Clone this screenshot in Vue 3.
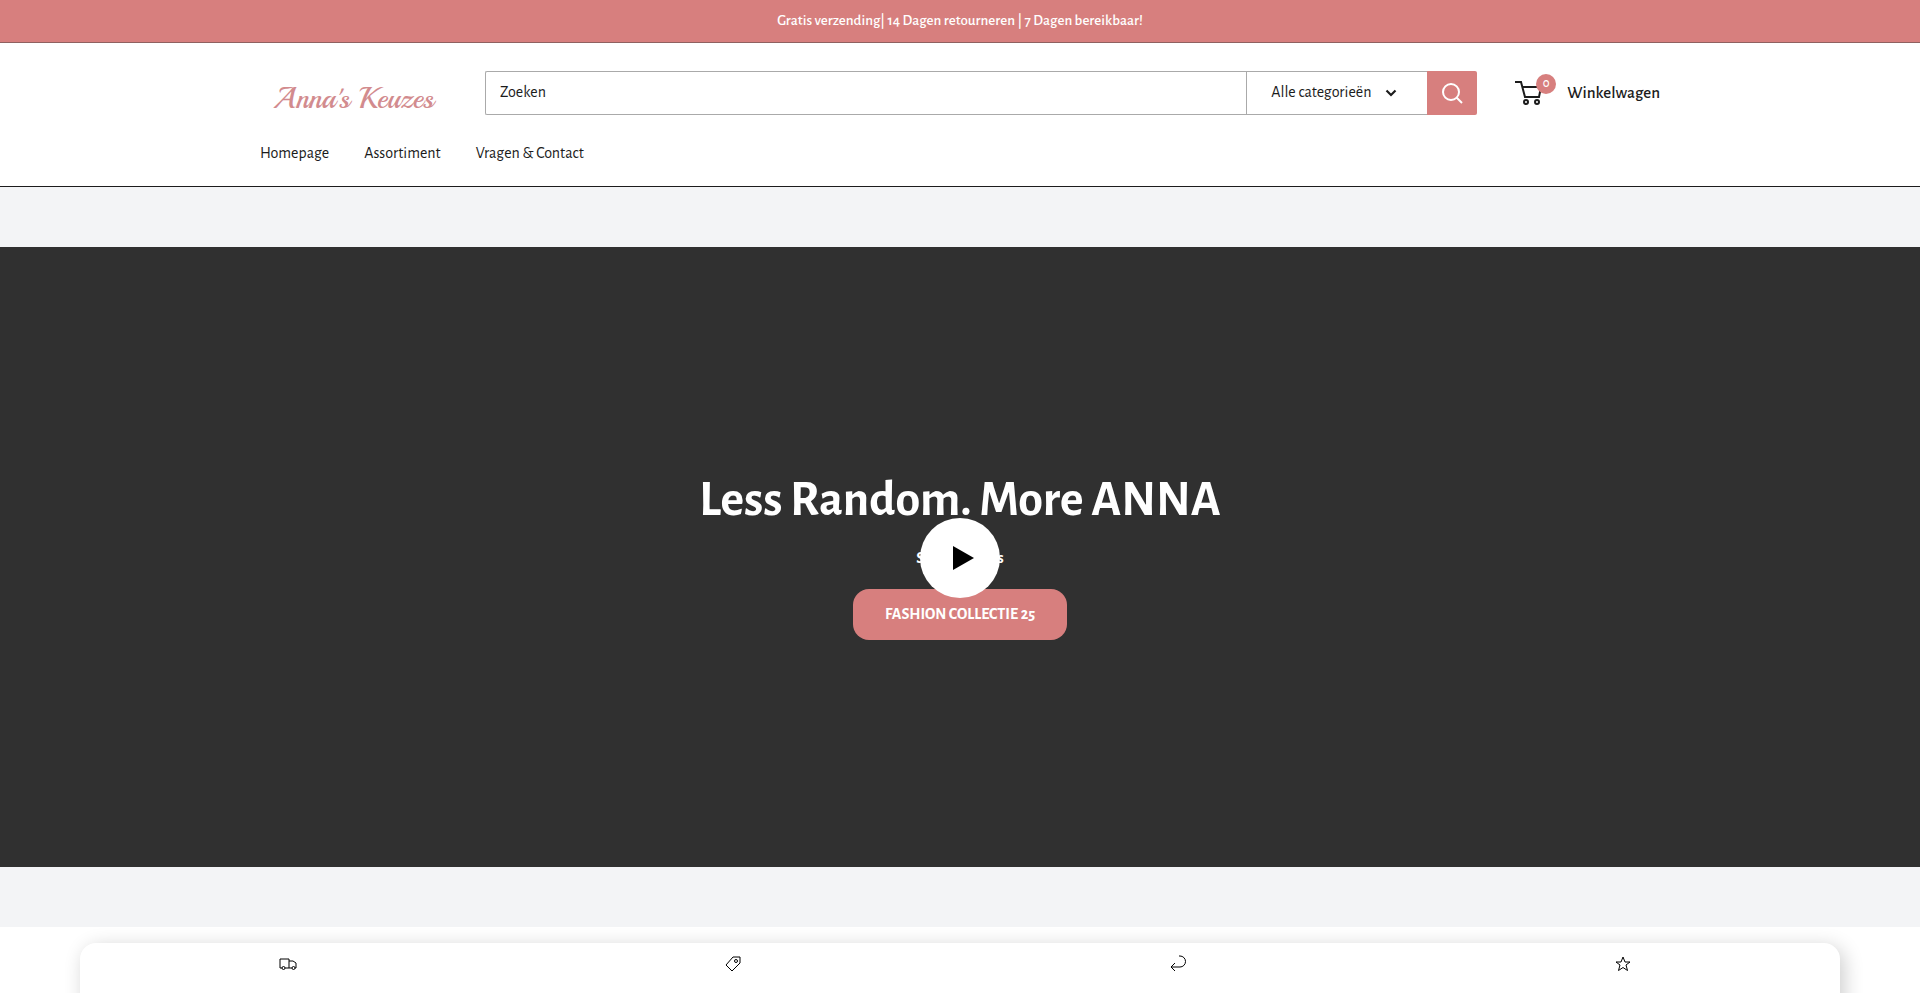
<script setup>
import { ref } from "vue";

const query = ref("");
const category = ref("all");
const cartCount = ref(0);

const links = ["Homepage", "Assortiment", "Vragen & Contact"];
const categories = [
  { value: "all", label: "Alle categorieën" },
];
</script>

<template>
  <div class="page">
    <div class="announcement">
      <p>Gratis verzending| 14 Dagen retourneren | 7 Dagen bereikbaar!</p>
    </div>

    <header class="header">
      <div class="container">
        <div class="header-row">
          <a href="#" class="logo">Anna's Keuzes</a>
          <form class="search" @submit.prevent>
            <input v-model="query" class="search-input" type="text" placeholder="Zoeken" aria-label="Zoeken" />
            <div class="search-filter">
              <select v-model="category" aria-label="Categorie">
                <option v-for="c in categories" :key="c.value" :value="c.value">{{ c.label }}</option>
              </select>
              <svg class="chevron" viewBox="0 0 12 8" width="12" height="8">
                <path d="M1.500 1.500 6 6l4.500-4.500" fill="none" stroke="currentColor" stroke-width="2.200" />
              </svg>
            </div>
            <button class="search-btn" type="submit" aria-label="Zoek">
              <svg viewBox="0 0 21 21" width="21" height="21" fill="none" stroke="currentColor" stroke-width="2">
                <circle cx="9" cy="9" r="8" />
                <path d="m14.500 14.500 5.500 5.500" />
              </svg>
            </button>
          </form>
          <a href="#" class="cart">
            <span class="cart-icon">
              <svg viewBox="0 0 27 24" width="27" height="24" fill="none" stroke="currentColor" stroke-width="2">
                <path d="M0 1h6l4 15h14l2-10H7.500" />
                <circle cx="11" cy="21" r="2" />
                <circle cx="22" cy="21" r="2" />
              </svg>
              <span class="cart-count">{{ cartCount }}</span>
            </span>
            <span>Winkelwagen</span>
          </a>
        </div>
        <nav class="nav">
          <a v-for="link in links" :key="link" href="#">{{ link }}</a>
        </nav>
      </div>
    </header>

    <section class="hero">
      <h1>Less Random. More ANNA</h1>
      <p>Shop de looks</p>
      <a href="#" class="hero-btn">FASHION COLLECTIE 25</a>
      <button class="play" type="button" aria-label="Video afspelen">
        <svg viewBox="0 0 21 24" width="21" height="24"><path d="M0 0v24l21-12z" /></svg>
      </button>
    </section>

    <section class="usps">
      <div class="usp-card">
        <div class="usp">
          <svg viewBox="0 0 18 18">
            <path d="M3 13H1V4h9v9H6M10 6h4l3 2v5h-1M13 13h-3" />
            <circle cx="4.500" cy="13" r="1.500" />
            <circle cx="14.500" cy="13" r="1.500" />
          </svg>
        </div>
        <div class="usp">
          <svg viewBox="0 0 18 18">
            <path d="M9 2h7v6l-8 8-6-6z" />
            <circle cx="12" cy="6" r="1.500" />
          </svg>
        </div>
        <div class="usp">
          <svg viewBox="0 0 18 18">
            <path d="M10 1h1a5.500 5.500 0 0 1 0 11H2M6 8l-4 4 4 4" />
          </svg>
        </div>
        <div class="usp">
          <svg viewBox="0 0 18 18">
            <path d="m9 2 2 5h5l-4 3 1.500 5.500L9 12.500l-4.500 3L6 10 2 7h5z" />
          </svg>
        </div>
      </div>
    </section>
  </div>
</template>

<style>
body {
  margin: 0;
  background: #fff;
}
</style>

<style scoped>
* {
  box-sizing: border-box;
}

.page {
  font-family: "Alegreya Sans", Lato, sans-serif;
  font-size: 16px;
  line-height: 24px;
  color: #1c1c1c;
  height: 100vh;
  overflow: hidden;
}

p,
h1 {
  margin: 0;
}

a {
  color: inherit;
  text-decoration: none;
}

.announcement {
  padding: 9px 16px;
  text-align: center;
  font-size: 15px;
  font-weight: 500;
  color: #fff;
  background: #d77f7e;
  border-bottom: 1px solid #8f6160;
}

.header {
  padding: 28px 0 21px;
  border-bottom: 1px solid #1c1c1c;
}

.container {
  max-width: 1400px;
  margin: 0 auto;
}

.header-row {
  display: flex;
  align-items: center;
}

.logo {
  width: 225px;
  padding: 12px 0 0 13px;
  font-family: Playball, "Liberation Serif", serif;
  font-size: 29px;
  color: #d28b8e;
  white-space: nowrap;
}

.search {
  display: flex;
  flex: 1;
  height: 44px;
}

.search-input {
  flex: 1;
  min-width: 0;
  padding: 0 14px 2px;
  font: inherit;
  color: inherit;
  border: 1px solid #aaa;
  border-right: none;
  border-radius: 2px 0 0 2px;
}

.search-input::placeholder {
  color: inherit;
  opacity: 1;
}

.search-filter {
  display: flex;
  align-items: center;
  width: 181px;
  padding-left: 24px;
  border: 1px solid #aaa;
  border-right: none;
}

.search-filter select {
  width: 114px;
  padding: 0 0 2px;
  font: inherit;
  color: inherit;
  background: none;
  border: none;
  appearance: none;
}

.search-btn {
  display: flex;
  align-items: center;
  justify-content: center;
  width: 50px;
  padding: 0;
  color: #fff;
  background: #d77f7e;
  border: none;
  border-radius: 0 2px 2px 0;
}

.cart {
  display: flex;
  align-items: center;
  gap: 25px;
  padding-left: 38px;
  font-weight: 500;
  font-size: 17px;
}

.cart-icon {
  display: flex;
  position: relative;
}

.cart-count {
  position: absolute;
  top: -7px;
  left: 21px;
  width: 20px;
  border-radius: 50%;
  font-size: 13px;
  line-height: 20px;
  text-align: center;
  color: #fff;
  background: #d77f7e;
}

.nav {
  display: flex;
  gap: 35px;
  padding-top: 26px;
}

.hero {
  display: flex;
  flex-direction: column;
  align-items: center;
  justify-content: center;
  position: relative;
  height: 740px;
  color: #fff;
  background: #303030;
  border: solid #f3f4f6;
  border-width: 60px 0;
}

.hero h1 {
  font-size: 50px;
  line-height: 52px;
}

.hero p {
  padding: 20px 0 19px;
  font-weight: 700;
}

.hero-btn {
  padding: 13px 32px 14px;
  font-weight: 700;
  background: #d77f7e;
  border-radius: 16px;
}

.play {
  display: flex;
  align-items: center;
  justify-content: center;
  position: absolute;
  inset: 2px 0 0;
  width: 80px;
  height: 80px;
  margin: auto;
  padding: 0 0 0 7px;
  background: #fff;
  border: none;
  border-radius: 50%;
}

.usps {
  padding: 16px 80px;
}

.usp-card {
  display: grid;
  grid-template-columns: repeat(4, 1fr);
  gap: 20px;
  height: 160px;
  padding-top: 12px;
  border-radius: 16px;
  background: #fff;
  box-shadow: 4px 4px 20px rgba(0, 0, 0, 0.2);
}

.usp {
  padding-right: 10px;
  text-align: center;
}

.usp svg {
  width: 18px;
  height: 18px;
  fill: none;
  stroke: #000;
}
</style>
